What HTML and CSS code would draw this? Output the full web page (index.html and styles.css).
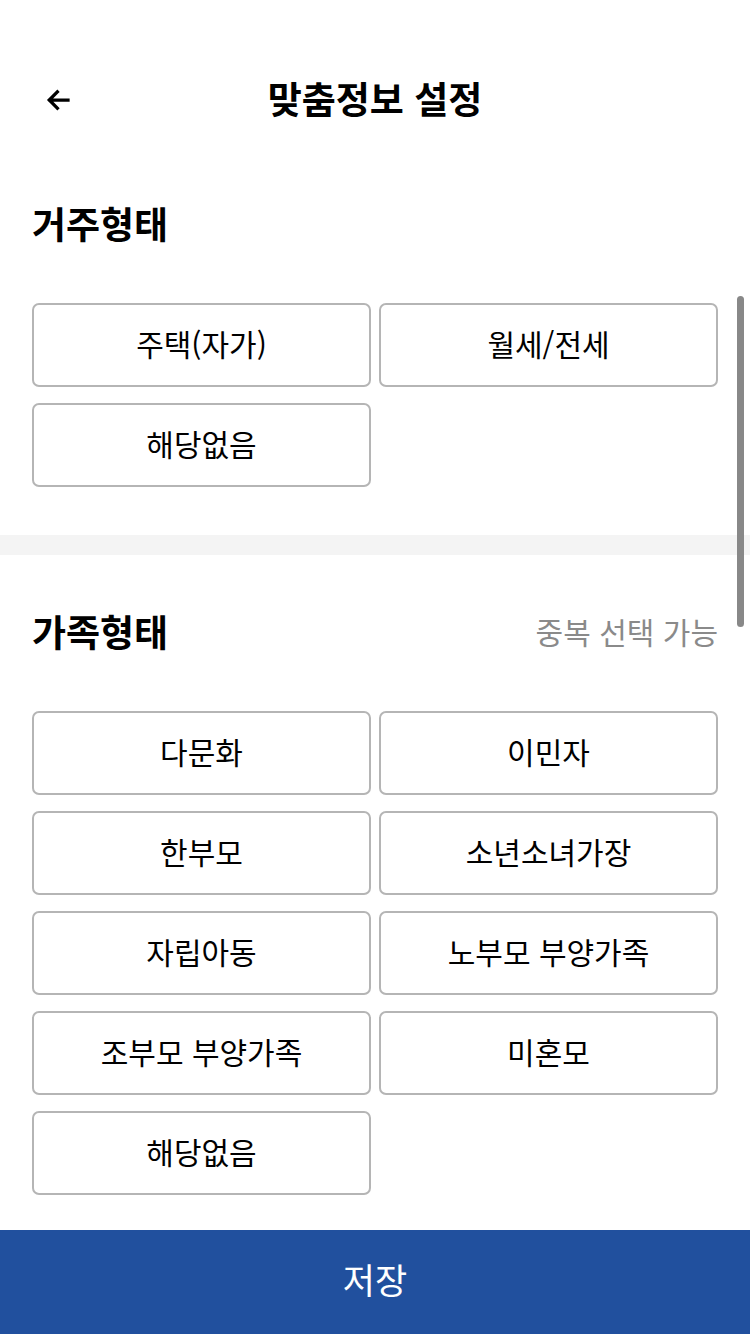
FILE: index.html
```html
<!DOCTYPE html>
<html lang="ko">
<head>
<meta charset="utf-8">
<title>맞춤정보 설정</title>
<link rel="stylesheet" href="styles.css">
</head>
<body>
<div class="screen">
  <header class="topbar">
    <button class="back" aria-label="뒤로">
      <svg width="30" height="30" viewBox="0 0 24 24"><path d="M20 12H5.5M11.5 5.5 5 12l6.5 6.5" fill="none" stroke="#000" stroke-width="2.6" stroke-linecap="square"/></svg>
    </button>
    <h1 class="title">맞춤정보 설정</h1>
  </header>

  <main class="content">
    <section class="section">
      <div class="section-head">
        <h2 class="section-title">거주형태</h2>
      </div>
      <div class="options">
        <button class="option">주택(자가)</button>
        <button class="option">월세/전세</button>
        <button class="option">해당없음</button>
      </div>
    </section>

    <div class="divider"></div>

    <section class="section second">
      <div class="section-head">
        <h2 class="section-title">가족형태</h2>
        <span class="hint">중복 선택 가능</span>
      </div>
      <div class="options">
        <button class="option">다문화</button>
        <button class="option">이민자</button>
        <button class="option">한부모</button>
        <button class="option">소년소녀가장</button>
        <button class="option">자립아동</button>
        <button class="option">노부모 부양가족</button>
        <button class="option">조부모 부양가족</button>
        <button class="option">미혼모</button>
        <button class="option">해당없음</button>
      </div>
    </section>
  </main>

  <div class="scrollbar"></div>

  <button class="save">저장</button>
</div>
</body>
</html>
```

FILE: styles.css
```css
* { box-sizing: border-box; }
html, body { margin: 0; padding: 0; background: #fff; }
body {
  font-family: "Noto Sans CJK KR", "Noto Sans", sans-serif;
  color: #000;
}
.screen {
  position: relative;
  width: 750px;
  height: 1334px;
  display: flex;
  flex-direction: column;
  overflow: hidden;
}
.topbar {
  position: relative;
  height: 80px;
  margin-top: 59px;
  display: flex;
  align-items: center;
  justify-content: center;
}
.back {
  position: absolute;
  left: 43px;
  top: 26px;
  width: 30px;
  height: 30px;
  padding: 0;
  border: 0;
  background: none;
  display: flex;
}
.title {
  margin: 0 0 2px;
  font-size: 37px;
  font-weight: 700;
  line-height: 48px;
}
.content { flex: 1; }
.section { padding: 0 32px; }
.section:first-child { padding-top: 61px; }
.second { padding-top: 53px; }
.section-head {
  height: 48px;
  display: flex;
  align-items: center;
  justify-content: space-between;
  margin-bottom: 55px;
}
.section-title {
  margin: 0 0 2px;
  font-size: 37px;
  font-weight: 700;
  line-height: 48px;
}
.hint {
  font-size: 30px;
  color: #8a8a8a;
  margin-bottom: 2px;
}
.option {
  height: 84px;
  border: 2px solid #b5b5b5;
  border-radius: 7px;
  background: #fff;
  font-family: inherit;
  font-size: 30px;
  color: #000;
  padding: 0 0 4px;
}
.options {
  display: grid;
  grid-template-columns: 1fr 1fr;
  column-gap: 8px;
  row-gap: 16px;
}
.divider {
  height: 20px;
  background: #f4f4f4;
  margin-top: 48px;
}
.scrollbar {
  position: absolute;
  right: 6px;
  top: 296px;
  width: 7px;
  height: 331px;
  border-radius: 4px;
  background: #888;
}
.save {
  height: 104px;
  border: 0;
  background: #21509e;
  color: #fff;
  font-family: inherit;
  font-size: 35px;
  padding: 0 0 7px;
}
```
